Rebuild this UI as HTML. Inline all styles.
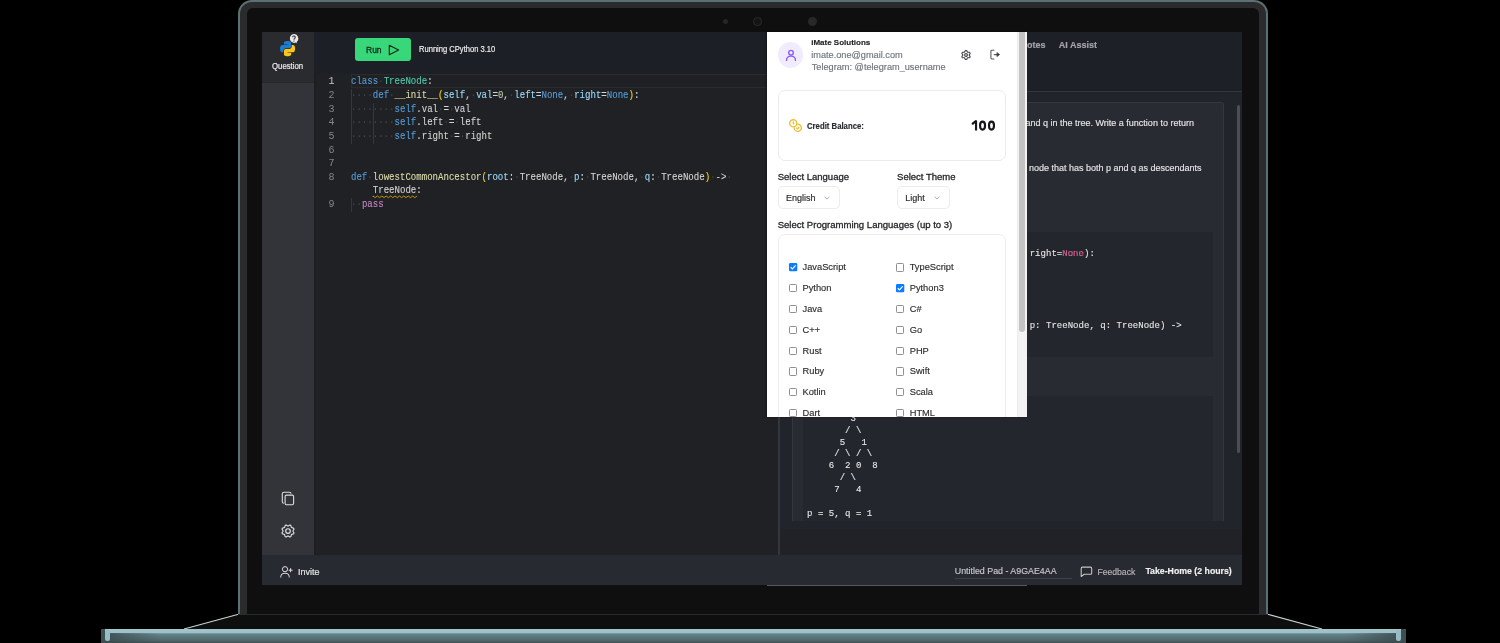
<!DOCTYPE html>
<html><head><meta charset="utf-8">
<style>
*{margin:0;padding:0;box-sizing:border-box}
html,body{width:1500px;height:643px;overflow:hidden;background:#000}
body{position:relative;font-family:"Liberation Sans",sans-serif}
.a{position:absolute}
.t{white-space:pre;line-height:normal;-webkit-text-stroke-width:0.15px}
.m{font-family:"Liberation Mono",monospace;white-space:pre}
svg{overflow:visible}
</style></head><body><div id="root" class="a" style="left:0;top:0;width:1500px;height:643px;will-change:transform">

<div class="a" style="left:238px;top:0px;width:1030px;height:615px;background:#5a7074;border-radius:14px 14px 0 0"></div>
<div class="a" style="left:240.4px;top:2px;width:1025.2px;height:613px;background:#2b2b2d;border-radius:12px 12px 0 0"></div>
<div class="a" style="left:247px;top:8px;width:1012px;height:607px;background:#0f0f0f;border-radius:6px 6px 0 0"></div>
<div class="a" style="left:722.9px;top:19px;width:5px;height:5px;border-radius:50%;background:#262626"></div>
<div class="a" style="left:753px;top:17.2px;width:8.6px;height:8.6px;border-radius:50%;background:#141414;border:1.4px solid #2c2c2c"></div>
<div class="a" style="left:807.5px;top:17.3px;width:9px;height:9px;border-radius:50%;background:#282828"></div>
<svg class="a" style="left:0;top:0" width="1500" height="643">
 <polygon points="238,614 1268,614 1322,629 184,629" fill="#0e0e0e"/>
 <line x1="238.5" y1="614.2" x2="184" y2="629" stroke="#c9d3d5" stroke-width="1.1"/>
 <line x1="1267.5" y1="614.2" x2="1322" y2="629" stroke="#c9d3d5" stroke-width="1.1"/>
 <line x1="238" y1="614.5" x2="1268" y2="614.5" stroke="#262b2d" stroke-width="1"/>
</svg>
<div class="a" style="left:100.6px;top:629px;width:1305px;height:14px;border-radius:2px 2px 0 0;background:linear-gradient(#a2c5cc 0,#9dc1c8 3.5px,#66838a 5px,#5b767b 8px,#4d6468 12px,#3d4e51 14px)"></div>
<div class="a" style="left:100.6px;top:633px;width:60px;height:10px;background:linear-gradient(to right,#3b4b4e 0,#3b4b4e 4px,rgba(59,75,78,.8) 10px,rgba(59,75,78,0) 60px)"></div>
<div class="a" style="left:1345.6px;top:633px;width:60px;height:10px;background:linear-gradient(to left,#3b4b4e 0,#3b4b4e 4px,rgba(59,75,78,.8) 10px,rgba(59,75,78,0) 60px)"></div>
<div class="a" style="left:100.6px;top:629px;width:4.6px;height:14px;border-radius:2px 0 0 0;background:#3d4f52"></div>
<div class="a" style="left:1401px;top:629px;width:4.6px;height:14px;border-radius:0 2px 0 0;background:#3d4f52"></div>
<div class="a" style="left:105px;top:630px;width:5px;height:11px;border-radius:3px 0 2px 2px;background:#98bcc3"></div>
<div class="a" style="left:1396px;top:630px;width:5px;height:11px;border-radius:0 3px 2px 2px;background:#98bcc3"></div>
<div class="a" style="left:262px;top:32px;width:980px;height:553px;background:#202125;"></div>
<div class="a" style="left:262px;top:32px;width:52px;height:50px;background:#2a2b2f;"></div>
<div class="a" style="left:262px;top:82px;width:52px;height:473px;background:#333439;"></div>
<div class="a" style="left:262px;top:82px;width:52px;height:1px;background:#26272b;"></div>
<div class="a" style="left:314px;top:32px;width:2px;height:523px;background:#1c1e24;"></div>
<div class="a" style="left:314px;top:32px;width:465px;height:42px;background:#1d1f27;"></div>
<div class="a" style="left:778px;top:32px;width:2px;height:523px;background:#33363c;"></div>
<div class="a" style="left:780px;top:32px;width:462px;height:59px;background:#1e2028;"></div>
<div class="a" style="left:780px;top:91px;width:462px;height:1px;background:#33363c;"></div>
<div class="a" style="left:780px;top:92px;width:462px;height:463px;background:#22242b;"></div>
<div class="a" style="left:780px;top:529px;width:462px;height:26px;background:#202228;"></div>
<div class="a" style="left:262px;top:555px;width:980px;height:30px;background:#272a31;"></div>
<svg class="a" style="left:280.3px;top:40.9px" width="15" height="15" viewBox="0 0 110 110">
<path fill="#1f7bcf" d="M54.9 0c-4.6 0-9 .4-12.8 1.1C30.8 3.1 28.7 7.3 28.7 15v10.2h26.6v3.4H18.7c-7.7 0-14.5 4.6-16.6 13.5-2.4 10.1-2.5 16.5 0 27.1 1.9 7.9 6.4 13.5 14.1 13.5h9.1V70.6c0-8.8 7.6-16.5 16.6-16.5h26.5c7.4 0 13.3-6.1 13.3-13.5V15c0-7.2-6.1-12.6-13.3-13.9C69.8.4 65 0 60.4 0z"/>
<path fill="#ffc61a" stroke="#2a2b2f" stroke-width="6" paint-order="stroke" d="M85.6 28.7v12c0 9.3-7.9 17.1-16.9 17.1H42.1c-7.3 0-13.3 6.2-13.3 13.5v25.5c0 7.2 6.3 11.5 13.3 13.6 8.4 2.5 16.5 2.9 26.5 0 6.7-1.9 13.3-5.8 13.3-13.6V86.5H55.5v-3.4h39.9c7.7 0 10.6-5.4 13.3-13.5 2.8-8.3 2.7-16.3 0-27.1-1.9-7.8-5.6-13.5-13.3-13.5z"/>
</svg>
<svg class="a" style="left:287.5px;top:32.5px" width="12" height="12" viewBox="0 0 12 12">
<path d="M5.9 0.9 A4.5 4.5 0 1 0 7.9 9.6 L8.9 10.6 L8.6 8.9 A4.5 4.5 0 0 0 5.9 0.9 Z" fill="#e9e9e9" stroke="#2a2b2f" stroke-width="0.8" paint-order="stroke"/>
<path d="M4.6 4.3 A1.35 1.35 0 1 1 6.6 5.5 C6.1 5.8 5.95 6.1 5.95 6.7" stroke="#3a3a3a" stroke-width="1.1" fill="none"/>
<circle cx="5.95" cy="8.1" r="0.65" fill="#3a3a3a"/>
</svg>
<div class="a t" style="top:60.63px;font-size:8.7px;color:#ececec;left:272.00px;transform:scaleX(0.896);transform-origin:left top;-webkit-text-stroke:0.2px #ececec;">Question</div>
<svg class="a" style="left:281px;top:491px" width="15" height="16" viewBox="0 0 15 16" fill="none" stroke="#dedede" stroke-width="1.1">
<rect x="4.1" y="4.1" width="8.5" height="9.6" rx="1.4"/>
<path d="M2.9 12.3 A1.6 1.6 0 0 1 1.3 10.7 V2.8 A1.6 1.6 0 0 1 2.9 1.2 H8.4 A1.6 1.6 0 0 1 10 2.8"/>
</svg>
<svg class="a" style="left:280.8px;top:523.6px" width="14" height="14" viewBox="0 0 14 14" fill="none" stroke="#e2e2e2" stroke-width="1.15" stroke-linejoin="round">
<path d="M12.00,7.00 L12.01,7.13 L12.05,7.26 L12.11,7.40 L12.19,7.55 L12.28,7.70 L12.38,7.85 L12.49,8.02 L12.59,8.19 L12.69,8.37 L12.77,8.55 L12.83,8.73 L12.87,8.91 L12.89,9.08 L12.87,9.25 L12.82,9.41 L12.74,9.56 L12.64,9.69 L12.50,9.80 L12.35,9.90 L12.17,9.99 L11.99,10.06 L11.80,10.11 L11.60,10.16 L11.41,10.20 L11.22,10.24 L11.05,10.28 L10.90,10.33 L10.76,10.38 L10.64,10.45 L10.54,10.54 L10.45,10.64 L10.38,10.76 L10.33,10.90 L10.28,11.05 L10.24,11.22 L10.20,11.41 L10.16,11.60 L10.11,11.80 L10.06,11.99 L9.99,12.17 L9.90,12.35 L9.80,12.50 L9.69,12.64 L9.56,12.74 L9.41,12.82 L9.25,12.87 L9.08,12.89 L8.91,12.87 L8.73,12.83 L8.55,12.77 L8.37,12.69 L8.19,12.59 L8.02,12.49 L7.85,12.38 L7.70,12.28 L7.55,12.19 L7.40,12.11 L7.26,12.05 L7.13,12.01 L7.00,12.00 L6.87,12.01 L6.74,12.05 L6.60,12.11 L6.45,12.19 L6.30,12.28 L6.15,12.38 L5.98,12.49 L5.81,12.59 L5.63,12.69 L5.45,12.77 L5.27,12.83 L5.09,12.87 L4.92,12.89 L4.75,12.87 L4.59,12.82 L4.44,12.74 L4.31,12.64 L4.20,12.50 L4.10,12.35 L4.01,12.17 L3.94,11.99 L3.89,11.80 L3.84,11.60 L3.80,11.41 L3.76,11.22 L3.72,11.05 L3.67,10.90 L3.62,10.76 L3.55,10.64 L3.46,10.54 L3.36,10.45 L3.24,10.38 L3.10,10.33 L2.95,10.28 L2.78,10.24 L2.59,10.20 L2.40,10.16 L2.20,10.11 L2.01,10.06 L1.83,9.99 L1.65,9.90 L1.50,9.80 L1.36,9.69 L1.26,9.56 L1.18,9.41 L1.13,9.25 L1.11,9.08 L1.13,8.91 L1.17,8.73 L1.23,8.55 L1.31,8.37 L1.41,8.19 L1.51,8.02 L1.62,7.85 L1.72,7.70 L1.81,7.55 L1.89,7.40 L1.95,7.26 L1.99,7.13 L2.00,7.00 L1.99,6.87 L1.95,6.74 L1.89,6.60 L1.81,6.45 L1.72,6.30 L1.62,6.15 L1.51,5.98 L1.41,5.81 L1.31,5.63 L1.23,5.45 L1.17,5.27 L1.13,5.09 L1.11,4.92 L1.13,4.75 L1.18,4.59 L1.26,4.44 L1.36,4.31 L1.50,4.20 L1.65,4.10 L1.83,4.01 L2.01,3.94 L2.20,3.89 L2.40,3.84 L2.59,3.80 L2.78,3.76 L2.95,3.72 L3.10,3.67 L3.24,3.62 L3.36,3.55 L3.46,3.46 L3.55,3.36 L3.62,3.24 L3.67,3.10 L3.72,2.95 L3.76,2.78 L3.80,2.59 L3.84,2.40 L3.89,2.20 L3.94,2.01 L4.01,1.83 L4.10,1.65 L4.20,1.50 L4.31,1.36 L4.44,1.26 L4.59,1.18 L4.75,1.13 L4.92,1.11 L5.09,1.13 L5.27,1.17 L5.45,1.23 L5.63,1.31 L5.81,1.41 L5.98,1.51 L6.15,1.62 L6.30,1.72 L6.45,1.81 L6.60,1.89 L6.74,1.95 L6.87,1.99 L7.00,2.00 L7.13,1.99 L7.26,1.95 L7.40,1.89 L7.55,1.81 L7.70,1.72 L7.85,1.62 L8.02,1.51 L8.19,1.41 L8.37,1.31 L8.55,1.23 L8.73,1.17 L8.91,1.13 L9.08,1.11 L9.25,1.13 L9.41,1.18 L9.56,1.26 L9.69,1.36 L9.80,1.50 L9.90,1.65 L9.99,1.83 L10.06,2.01 L10.11,2.20 L10.16,2.40 L10.20,2.59 L10.24,2.78 L10.28,2.95 L10.33,3.10 L10.38,3.24 L10.45,3.36 L10.54,3.46 L10.64,3.55 L10.76,3.62 L10.90,3.67 L11.05,3.72 L11.22,3.76 L11.41,3.80 L11.60,3.84 L11.80,3.89 L11.99,3.94 L12.17,4.01 L12.35,4.10 L12.50,4.20 L12.64,4.31 L12.74,4.44 L12.82,4.59 L12.87,4.75 L12.89,4.92 L12.87,5.09 L12.83,5.27 L12.77,5.45 L12.69,5.63 L12.59,5.81 L12.49,5.98 L12.38,6.15 L12.28,6.30 L12.19,6.45 L12.11,6.60 L12.05,6.74 L12.01,6.87Z"/>
<circle cx="7.0" cy="7.0" r="2.3"/>
</svg>
<div class="a" style="left:355.4px;top:37.5px;width:55.5px;height:23.5px;border-radius:3px;background:#38d87a"></div>
<div class="a t" style="top:43.83px;font-size:9.8px;color:#12261a;left:365.90px;transform:scaleX(0.867);transform-origin:left top;-webkit-text-stroke:0.3px #12261a;">Run</div>
<svg class="a" style="left:388px;top:43.5px" width="12" height="12" viewBox="0 0 12 12">
<path d="M1.3 1.2 L10.6 6 L1.3 10.8 Z" fill="none" stroke="#12261a" stroke-width="1.15" stroke-linejoin="round"/>
</svg>
<div class="a t" style="top:44.42px;font-size:8.6px;color:#f2f2f2;left:418.70px;transform:scaleX(0.882);transform-origin:left top;">Running CPython 3.10</div>
<div class="a" style="left:351px;top:73.8px;width:416px;height:13.9px;border:1px solid #2b2b2b;border-right:none"></div>
<div class="a m" style="left:300px;width:34.5px;text-align:right;top:75.30px;height:13.66px;line-height:13.66px;font-size:10px;color:#c6c6c6">1</div>
<div class="a m" style="left:351.3px;top:75.30px;height:13.66px;line-height:13.66px;font-size:10px;transform:scaleX(0.906);transform-origin:left top;-webkit-text-stroke:0.1px"><span style="color:#569cd6">class</span><span style="color:#45464a">·</span><span style="color:#4ec9b0">TreeNode</span><span style="color:#d4d4d4">:</span></div>
<div class="a m" style="left:300px;width:34.5px;text-align:right;top:88.96px;height:13.66px;line-height:13.66px;font-size:10px;color:#858585">2</div>
<div class="a m" style="left:351.3px;top:88.96px;height:13.66px;line-height:13.66px;font-size:10px;transform:scaleX(0.906);transform-origin:left top;-webkit-text-stroke:0.1px"><span style="color:#45464a">····</span><span style="color:#569cd6">def</span><span style="color:#45464a">·</span><span style="color:#dcdcaa">__init__</span><span style="color:#ffd700">(</span><span style="color:#9cdcfe">self</span><span style="color:#d4d4d4">,</span><span style="color:#45464a">·</span><span style="color:#9cdcfe">val</span><span style="color:#d4d4d4">=</span><span style="color:#b5cea8">0</span><span style="color:#d4d4d4">,</span><span style="color:#45464a">·</span><span style="color:#9cdcfe">left</span><span style="color:#d4d4d4">=</span><span style="color:#569cd6">None</span><span style="color:#d4d4d4">,</span><span style="color:#45464a">·</span><span style="color:#9cdcfe">right</span><span style="color:#d4d4d4">=</span><span style="color:#569cd6">None</span><span style="color:#ffd700">)</span><span style="color:#d4d4d4">:</span></div>
<div class="a m" style="left:300px;width:34.5px;text-align:right;top:102.62px;height:13.66px;line-height:13.66px;font-size:10px;color:#858585">3</div>
<div class="a m" style="left:351.3px;top:102.62px;height:13.66px;line-height:13.66px;font-size:10px;transform:scaleX(0.906);transform-origin:left top;-webkit-text-stroke:0.1px"><span style="color:#45464a">········</span><span style="color:#569cd6">self</span><span style="color:#d4d4d4">.val</span><span style="color:#45464a">·</span><span style="color:#d4d4d4">=</span><span style="color:#45464a">·</span><span style="color:#d4d4d4">val</span></div>
<div class="a m" style="left:300px;width:34.5px;text-align:right;top:116.28px;height:13.66px;line-height:13.66px;font-size:10px;color:#858585">4</div>
<div class="a m" style="left:351.3px;top:116.28px;height:13.66px;line-height:13.66px;font-size:10px;transform:scaleX(0.906);transform-origin:left top;-webkit-text-stroke:0.1px"><span style="color:#45464a">········</span><span style="color:#569cd6">self</span><span style="color:#d4d4d4">.left</span><span style="color:#45464a">·</span><span style="color:#d4d4d4">=</span><span style="color:#45464a">·</span><span style="color:#d4d4d4">left</span></div>
<div class="a m" style="left:300px;width:34.5px;text-align:right;top:129.94px;height:13.66px;line-height:13.66px;font-size:10px;color:#858585">5</div>
<div class="a m" style="left:351.3px;top:129.94px;height:13.66px;line-height:13.66px;font-size:10px;transform:scaleX(0.906);transform-origin:left top;-webkit-text-stroke:0.1px"><span style="color:#45464a">········</span><span style="color:#569cd6">self</span><span style="color:#d4d4d4">.right</span><span style="color:#45464a">·</span><span style="color:#d4d4d4">=</span><span style="color:#45464a">·</span><span style="color:#d4d4d4">right</span></div>
<div class="a m" style="left:300px;width:34.5px;text-align:right;top:143.60px;height:13.66px;line-height:13.66px;font-size:10px;color:#858585">6</div>
<div class="a m" style="left:300px;width:34.5px;text-align:right;top:157.26px;height:13.66px;line-height:13.66px;font-size:10px;color:#858585">7</div>
<div class="a m" style="left:300px;width:34.5px;text-align:right;top:170.92px;height:13.66px;line-height:13.66px;font-size:10px;color:#858585">8</div>
<div class="a m" style="left:351.3px;top:170.92px;height:13.66px;line-height:13.66px;font-size:10px;transform:scaleX(0.906);transform-origin:left top;-webkit-text-stroke:0.1px"><span style="color:#569cd6">def</span><span style="color:#45464a">·</span><span style="color:#dcdcaa">lowestCommonAncestor</span><span style="color:#ffd700">(</span><span style="color:#9cdcfe">root</span><span style="color:#d4d4d4">:</span><span style="color:#45464a">·</span><span style="color:#d4d4d4">TreeNode</span><span style="color:#d4d4d4">,</span><span style="color:#45464a">·</span><span style="color:#9cdcfe">p</span><span style="color:#d4d4d4">:</span><span style="color:#45464a">·</span><span style="color:#d4d4d4">TreeNode</span><span style="color:#d4d4d4">,</span><span style="color:#45464a">·</span><span style="color:#9cdcfe">q</span><span style="color:#d4d4d4">:</span><span style="color:#45464a">·</span><span style="color:#d4d4d4">TreeNode</span><span style="color:#ffd700">)</span><span style="color:#45464a">·</span><span style="color:#d4d4d4">-&gt;</span><span style="color:#45464a">·</span></div>
<div class="a m" style="left:351.3px;top:183.88px;height:13.66px;line-height:13.66px;font-size:10px;transform:scaleX(0.906);transform-origin:left top;-webkit-text-stroke:0.1px"><span style="color:#45464a">    </span><span style="color:#d4d4d4">TreeNode</span><span style="color:#d4d4d4">:</span></div>
<div class="a m" style="left:300px;width:34.5px;text-align:right;top:198.24px;height:13.66px;line-height:13.66px;font-size:10px;color:#858585">9</div>
<div class="a m" style="left:351.3px;top:198.24px;height:13.66px;line-height:13.66px;font-size:10px;transform:scaleX(0.906);transform-origin:left top;-webkit-text-stroke:0.1px"><span style="color:#45464a">··</span><span style="color:#c586c0">pass</span></div>
<div class="a" style="left:351.3px;top:88.96px;width:1px;height:54.64px;background:#36373a;"></div>
<div class="a" style="left:373.06px;top:102.62px;width:1px;height:40.980000000000004px;background:#36373a;"></div>
<div class="a" style="left:351.3px;top:198.24px;width:1px;height:13.66px;background:#36373a;"></div>
<svg class="a" style="left:373px;top:194.5px" width="45" height="4" viewBox="0 0 45 4">
<path d="M0 2 L0.00 1.0 L2.20 2.6 L4.40 1.0 L6.60 2.6 L8.80 1.0 L11.00 2.6 L13.20 1.0 L15.40 2.6 L17.60 1.0 L19.80 2.6 L22.00 1.0 L24.20 2.6 L26.40 1.0 L28.60 2.6 L30.80 1.0 L33.00 2.6 L35.20 1.0 L37.40 2.6 L39.60 1.0 L41.80 2.6 L44.00 1.0" stroke="#cfa000" stroke-width="0.9" fill="none" stroke-linejoin="round"/>
</svg>
<div class="a t" style="top:39.75px;font-size:9px;color:#a4a5aa;right:454.40px;font-weight:bold;">Notes</div>
<div class="a t" style="top:39.75px;font-size:9px;color:#a4a5aa;left:1058.80px;font-weight:bold;">AI Assist</div>
<div class="a" style="left:792px;top:102px;width:432px;height:419px;background:#282b31;border:1px solid #34373d;border-bottom:none;border-radius:3px 3px 0 0"></div>
<div class="a t" style="top:118.16px;font-size:9px;color:#e4e4e6;right:306.10px;">Given a binary tree root and two nodes p and q in the tree. Write a function to return</div>
<div class="a t" style="top:162.55px;font-size:9px;color:#e4e4e6;right:298.40px;">The lowest common ancestor is defined as the lowest node that has both p and q as descendants</div>
<div class="a" style="left:803px;top:232px;width:410px;height:125px;background:#23262c"></div>
<div class="a m" style="left:807.1px;top:236.20px;height:11.9px;line-height:11.9px;font-size:9.05px;-webkit-text-stroke:0.1px #e6e6e6"><span style="color:#e6e6e6">class TreeNode:</span></div>
<div class="a m" style="left:807.1px;top:248.10px;height:11.9px;line-height:11.9px;font-size:9.05px;-webkit-text-stroke:0.1px #e6e6e6"><span style="color:#e6e6e6">    def __init__(self, val=0, left=None, right=</span><span style="color:#e0307a">None</span><span style="color:#e6e6e6">):</span></div>
<div class="a m" style="left:807.1px;top:260.00px;height:11.9px;line-height:11.9px;font-size:9.05px;-webkit-text-stroke:0.1px #e6e6e6"><span style="color:#e6e6e6">        self.val = val</span></div>
<div class="a m" style="left:807.1px;top:271.90px;height:11.9px;line-height:11.9px;font-size:9.05px;-webkit-text-stroke:0.1px #e6e6e6"><span style="color:#e6e6e6">        self.left = left</span></div>
<div class="a m" style="left:807.1px;top:283.80px;height:11.9px;line-height:11.9px;font-size:9.05px;-webkit-text-stroke:0.1px #e6e6e6"><span style="color:#e6e6e6">        self.right = right</span></div>
<div class="a m" style="left:807.1px;top:319.50px;height:11.9px;line-height:11.9px;font-size:9.05px;-webkit-text-stroke:0.1px #e6e6e6"><span style="color:#e6e6e6">def lowestCommonAncestor(root: TreeNode, p: TreeNode, q: TreeNode) -&gt;</span></div>
<div class="a m" style="left:807.1px;top:331.40px;height:11.9px;line-height:11.9px;font-size:9.05px;-webkit-text-stroke:0.1px #e6e6e6"><span style="color:#e6e6e6">TreeNode:</span></div>
<div class="a m" style="left:807.1px;top:343.30px;height:11.9px;line-height:11.9px;font-size:9.05px;-webkit-text-stroke:0.1px #e6e6e6"><span style="color:#e6e6e6">    pass</span></div>
<div class="a" style="left:803px;top:396.4px;width:410px;height:124.6px;background:#23262c;overflow:hidden">
<div class="a m" style="left:4.1px;top:16.40px;height:11.9px;line-height:11.9px;font-size:9.05px;color:#e6e6e6;-webkit-text-stroke:0.1px #e6e6e6">        3</div>
<div class="a m" style="left:4.1px;top:28.30px;height:11.9px;line-height:11.9px;font-size:9.05px;color:#e6e6e6;-webkit-text-stroke:0.1px #e6e6e6">       / \</div>
<div class="a m" style="left:4.1px;top:40.20px;height:11.9px;line-height:11.9px;font-size:9.05px;color:#e6e6e6;-webkit-text-stroke:0.1px #e6e6e6">      5   1</div>
<div class="a m" style="left:4.1px;top:52.10px;height:11.9px;line-height:11.9px;font-size:9.05px;color:#e6e6e6;-webkit-text-stroke:0.1px #e6e6e6">     / \ / \</div>
<div class="a m" style="left:4.1px;top:64.00px;height:11.9px;line-height:11.9px;font-size:9.05px;color:#e6e6e6;-webkit-text-stroke:0.1px #e6e6e6">    6  2 0  8</div>
<div class="a m" style="left:4.1px;top:75.90px;height:11.9px;line-height:11.9px;font-size:9.05px;color:#e6e6e6;-webkit-text-stroke:0.1px #e6e6e6">      / \</div>
<div class="a m" style="left:4.1px;top:87.80px;height:11.9px;line-height:11.9px;font-size:9.05px;color:#e6e6e6;-webkit-text-stroke:0.1px #e6e6e6">     7   4</div>
<div class="a m" style="left:4.1px;top:111.60px;height:11.9px;line-height:11.9px;font-size:9.05px;color:#e6e6e6;-webkit-text-stroke:0.1px #e6e6e6">p = 5, q = 1</div>
<div class="a m" style="left:4.1px;top:123.50px;height:11.9px;line-height:11.9px;font-size:9.05px;color:#e6e6e6;-webkit-text-stroke:0.1px #e6e6e6">Output: 3</div>
</div>
<div class="a" style="left:1237px;top:105px;width:3px;height:348px;border-radius:2px;background:#4c4e53"></div>
<svg class="a" style="left:280px;top:565.5px" width="13" height="12" viewBox="0 0 13 12" fill="none" stroke="#dedede" stroke-width="1">
<circle cx="5" cy="3.2" r="2.6"/>
<path d="M0.8 11.5 V10.2 A3.3 3.3 0 0 1 4.1 7.3 H5.9 A3.3 3.3 0 0 1 9.2 10.2 V11.5"/>
<path d="M10.6 2.2 V6.2 M8.6 4.2 H12.6"/>
</svg>
<div class="a t" style="top:566.75px;font-size:9px;color:#e2e2e2;left:297.90px;-webkit-text-stroke:0.2px #e2e2e2;">Invite</div>
<div class="a t" style="top:566.39px;font-size:8.85px;color:#c9cacd;left:954.80px;">Untitled Pad - A9GAE4AA</div>
<div class="a" style="left:954.8px;top:577.6px;width:117px;height:1px;background:#3f4249;"></div>
<svg class="a" style="left:1079.5px;top:565.8px" width="13" height="12" viewBox="0 0 13 12" fill="none" stroke="#c4c4c4" stroke-width="1.1" stroke-linejoin="round">
<path d="M2.4 1.1 H10.4 A1.3 1.3 0 0 1 11.7 2.4 V6.9 A1.3 1.3 0 0 1 10.4 8.2 H4.3 L1.2 10.5 V2.4 A1.3 1.3 0 0 1 2.4 1.1 Z"/>
</svg>
<div class="a t" style="top:566.62px;font-size:8.6px;color:#b4b5b8;left:1097.50px;">Feedback</div>
<div class="a t" style="top:566.48px;font-size:8.75px;color:#f1f1f1;left:1145.40px;font-weight:bold;">Take-Home (2 hours)</div>
<div class="a" style="left:766.5px;top:32px;width:260.5px;height:385px;background:#fff;box-shadow:-1px 0 2px rgba(0,0,0,.35)"></div>
<div class="a" style="left:0;top:0;width:1500px;height:643px;clip-path:inset(32px 473px 226px 766.5px)">
<div class="a" style="left:1016.9px;top:32px;width:10.1px;height:385px;background:#f3f3f3;border-left:1px solid #ececec"></div>
<div class="a" style="left:1019.2px;top:32px;width:5.4px;height:300.3px;border-radius:0 0 3px 3px;background:#c3c3c3"></div>
<div class="a" style="left:777.6px;top:42.1px;width:25.7px;height:25.7px;border-radius:50%;background:#f1ecfd"></div>
<svg class="a" style="left:785.5px;top:48.5px" width="11" height="13" viewBox="0 0 11 13" fill="none" stroke="#8b5cf6" stroke-width="1.4" stroke-linecap="round">
<circle cx="5" cy="3.7" r="2.3"/>
<path d="M0.5 11.4 A4.5 4.3 0 0 1 9.5 11.4"/>
</svg>
<div class="a t" style="top:37.96px;font-size:8px;color:#1f2024;left:811.20px;font-weight:bold;">iMate Solutions</div>
<div class="a t" style="top:49.67px;font-size:9.2px;color:#70747c;left:811.20px;">imate.one@gmail.com</div>
<div class="a t" style="top:61.67px;font-size:9.2px;color:#6f737b;left:811.70px;">Telegram: @telegram_username</div>
<svg class="a" style="left:961px;top:50px" width="10" height="10" viewBox="0 0 10 10" fill="none" stroke="#4b4d52" stroke-width="1.2" stroke-linejoin="round">
<path d="M8.30,5.00 L8.30,5.09 L8.30,5.17 L8.29,5.26 L8.30,5.35 L8.36,5.44 L8.43,5.54 L8.51,5.65 L8.60,5.76 L8.68,5.88 L8.77,6.01 L8.85,6.14 L8.92,6.27 L8.98,6.41 L9.04,6.55 L9.07,6.69 L9.09,6.82 L9.06,6.94 L9.01,7.04 L8.95,7.15 L8.90,7.25 L8.84,7.35 L8.77,7.45 L8.71,7.55 L8.63,7.63 L8.50,7.68 L8.36,7.72 L8.21,7.75 L8.06,7.76 L7.91,7.76 L7.76,7.76 L7.61,7.75 L7.46,7.73 L7.32,7.72 L7.19,7.70 L7.06,7.69 L6.95,7.68 L6.87,7.72 L6.80,7.77 L6.72,7.81 L6.65,7.86 L6.57,7.90 L6.50,7.94 L6.42,7.98 L6.35,8.03 L6.30,8.13 L6.25,8.25 L6.19,8.37 L6.14,8.50 L6.08,8.63 L6.01,8.77 L5.94,8.90 L5.86,9.03 L5.77,9.16 L5.68,9.27 L5.58,9.37 L5.47,9.46 L5.35,9.49 L5.24,9.49 L5.12,9.50 L5.00,9.50 L4.88,9.50 L4.76,9.49 L4.65,9.49 L4.53,9.46 L4.42,9.37 L4.32,9.27 L4.23,9.16 L4.14,9.03 L4.06,8.90 L3.99,8.77 L3.92,8.63 L3.86,8.50 L3.81,8.37 L3.75,8.25 L3.70,8.13 L3.65,8.03 L3.58,7.98 L3.50,7.94 L3.43,7.90 L3.35,7.86 L3.28,7.81 L3.20,7.77 L3.13,7.72 L3.05,7.68 L2.94,7.69 L2.81,7.70 L2.68,7.72 L2.54,7.73 L2.39,7.75 L2.24,7.76 L2.09,7.76 L1.94,7.76 L1.79,7.75 L1.64,7.72 L1.50,7.68 L1.37,7.63 L1.29,7.55 L1.23,7.45 L1.16,7.35 L1.10,7.25 L1.05,7.15 L0.99,7.04 L0.94,6.94 L0.91,6.82 L0.93,6.69 L0.96,6.55 L1.02,6.41 L1.08,6.27 L1.15,6.14 L1.23,6.01 L1.32,5.88 L1.40,5.76 L1.49,5.65 L1.57,5.54 L1.64,5.44 L1.70,5.35 L1.71,5.26 L1.70,5.17 L1.70,5.09 L1.70,5.00 L1.70,4.91 L1.70,4.83 L1.71,4.74 L1.70,4.65 L1.64,4.56 L1.57,4.46 L1.49,4.35 L1.40,4.24 L1.32,4.12 L1.23,3.99 L1.15,3.86 L1.08,3.73 L1.02,3.59 L0.96,3.45 L0.93,3.31 L0.91,3.18 L0.94,3.06 L0.99,2.96 L1.05,2.85 L1.10,2.75 L1.16,2.65 L1.23,2.55 L1.29,2.45 L1.37,2.37 L1.50,2.32 L1.64,2.28 L1.79,2.25 L1.94,2.24 L2.09,2.24 L2.24,2.24 L2.39,2.25 L2.54,2.27 L2.68,2.28 L2.81,2.30 L2.94,2.31 L3.05,2.32 L3.13,2.28 L3.20,2.23 L3.28,2.19 L3.35,2.14 L3.43,2.10 L3.50,2.06 L3.58,2.02 L3.65,1.97 L3.70,1.87 L3.75,1.75 L3.81,1.63 L3.86,1.50 L3.92,1.37 L3.99,1.23 L4.06,1.10 L4.14,0.97 L4.23,0.84 L4.32,0.73 L4.42,0.63 L4.53,0.54 L4.65,0.51 L4.76,0.51 L4.88,0.50 L5.00,0.50 L5.12,0.50 L5.24,0.51 L5.35,0.51 L5.47,0.54 L5.58,0.63 L5.68,0.73 L5.77,0.84 L5.86,0.97 L5.94,1.10 L6.01,1.23 L6.08,1.37 L6.14,1.50 L6.19,1.63 L6.25,1.75 L6.30,1.87 L6.35,1.97 L6.42,2.02 L6.50,2.06 L6.57,2.10 L6.65,2.14 L6.72,2.19 L6.80,2.23 L6.87,2.28 L6.95,2.32 L7.06,2.31 L7.19,2.30 L7.32,2.28 L7.46,2.27 L7.61,2.25 L7.76,2.24 L7.91,2.24 L8.06,2.24 L8.21,2.25 L8.36,2.28 L8.50,2.32 L8.63,2.37 L8.71,2.45 L8.77,2.55 L8.84,2.65 L8.90,2.75 L8.95,2.85 L9.01,2.96 L9.06,3.06 L9.09,3.18 L9.07,3.31 L9.04,3.45 L8.98,3.59 L8.92,3.73 L8.85,3.86 L8.77,3.99 L8.68,4.12 L8.60,4.24 L8.51,4.35 L8.43,4.46 L8.36,4.56 L8.30,4.65 L8.29,4.74 L8.30,4.83 L8.30,4.91Z"/>
<circle cx="5.0" cy="5.0" r="1.4"/>
</svg>
<svg class="a" style="left:989.5px;top:49.2px" width="11" height="11" viewBox="0 0 11 11" fill="none" stroke="#55575c" stroke-width="1.1" stroke-linecap="round" stroke-linejoin="round">
<path d="M3.9 1.2 H1.8 A0.9 0.9 0 0 0 0.9 2.1 V9.1 A0.9 0.9 0 0 0 1.8 10 H3.9"/>
<path d="M4.3 5.6 H7.5"/>
<path d="M7.2 3.7 L9.6 5.6 L7.2 7.5 Z" fill="#33353a" stroke="#33353a" stroke-width="0.6"/>
</svg>
<div class="a" style="left:777.7px;top:89.5px;width:228.4px;height:71.6px;border:1px solid #ebebeb;border-radius:7px"></div>
<svg class="a" style="left:788.5px;top:119px" width="13" height="13" viewBox="0 0 13 13" fill="none" stroke="#ecc03a" stroke-width="1.4">
<circle cx="4.3" cy="4.3" r="3.6"/>
<path d="M4.3 2.6 V4.3 L5.3 5"/>
<path d="M8.4 5.2 A3.6 3.6 0 1 1 5.2 8.4"/>
<path d="M7.2 8.8 L8.6 9.8 L10.2 7.9"/>
</svg>
<div class="a t" style="top:120.70px;font-size:8.4px;color:#2a2b30;left:806.60px;font-weight:bold;transform:scaleX(0.925);transform-origin:left top;">Credit Balance:</div>
<svg class="a" style="left:0;top:0" width="1" height="1"><g fill="none" stroke="#15161a" stroke-width="2.15">
<path d="M972.7 123.7 L975.6 121.3" stroke-linecap="round"/>
<path d="M976.05 120.6 V130.6"/>
<ellipse cx="982.55" cy="125.6" rx="2.5" ry="3.95"/>
<ellipse cx="991.5" cy="125.6" rx="2.5" ry="3.95"/>
</g></svg>
<div class="a t" style="top:170.50px;font-size:9.5px;color:#26272b;left:777.70px;-webkit-text-stroke:0.3px #26272b;">Select Language</div>
<div class="a t" style="top:170.50px;font-size:9.5px;color:#26272b;left:897.10px;-webkit-text-stroke:0.3px #26272b;">Select Theme</div>
<div class="a" style="left:777.7px;top:186.2px;width:62.2px;height:23.2px;border:1px solid #ececec;border-radius:5px"></div>
<div class="a t" style="top:193.05px;font-size:9px;color:#2a2a2a;left:785.90px;">English</div>
<div class="a" style="left:897.1px;top:186.2px;width:53.3px;height:23.2px;border:1px solid #ececec;border-radius:5px"></div>
<div class="a t" style="top:193.05px;font-size:9px;color:#2a2a2a;left:905.30px;">Light</div>
<svg class="a" style="left:823.5px;top:195.8px" width="6" height="4" viewBox="0 0 6 4"><path d="M0.5 0.8 L3 3 L5.5 0.8" fill="none" stroke="#9a9a9a" stroke-width="0.8"/></svg>
<svg class="a" style="left:934.0px;top:195.8px" width="6" height="4" viewBox="0 0 6 4"><path d="M0.5 0.8 L3 3 L5.5 0.8" fill="none" stroke="#9a9a9a" stroke-width="0.8"/></svg>
<div class="a t" style="top:219.16px;font-size:9.55px;color:#26272b;left:777.70px;-webkit-text-stroke:0.3px #26272b;">Select Programming Languages (up to 3)</div>
<div class="a" style="left:778px;top:234.4px;width:228.3px;height:200px;border:1px solid #ececec;border-radius:7px"></div>
<svg class="a" style="left:788.6px;top:263.2px" width="8.3" height="8.3" viewBox="0 0 8 8"><rect x="0" y="0" width="8" height="8" rx="1.3" fill="#0b7bff"/><path d="M1.7 4.1 L3.3 5.7 L6.4 2.3" stroke="#fff" stroke-width="1.1" fill="none"/></svg>
<div class="a" style="left:896.1px;top:263.4px;width:8.3px;height:8.3px;border:0.75px solid #8f8f8f;border-radius:1.3px"></div>
<div class="a t" style="top:262.38px;font-size:9.3px;color:#2e2e2e;left:802.50px;">JavaScript</div>
<div class="a t" style="top:262.38px;font-size:9.3px;color:#2e2e2e;left:909.70px;">TypeScript</div>
<div class="a" style="left:788.6px;top:284.2px;width:8.3px;height:8.3px;border:0.75px solid #8f8f8f;border-radius:1.3px"></div>
<svg class="a" style="left:896.1px;top:284.0px" width="8.3" height="8.3" viewBox="0 0 8 8"><rect x="0" y="0" width="8" height="8" rx="1.3" fill="#0b7bff"/><path d="M1.7 4.1 L3.3 5.7 L6.4 2.3" stroke="#fff" stroke-width="1.1" fill="none"/></svg>
<div class="a t" style="top:283.18px;font-size:9.3px;color:#2e2e2e;left:802.50px;">Python</div>
<div class="a t" style="top:283.18px;font-size:9.3px;color:#2e2e2e;left:909.70px;">Python3</div>
<div class="a" style="left:788.6px;top:305.0px;width:8.3px;height:8.3px;border:0.75px solid #8f8f8f;border-radius:1.3px"></div>
<div class="a" style="left:896.1px;top:305.0px;width:8.3px;height:8.3px;border:0.75px solid #8f8f8f;border-radius:1.3px"></div>
<div class="a t" style="top:303.98px;font-size:9.3px;color:#2e2e2e;left:802.50px;">Java</div>
<div class="a t" style="top:303.98px;font-size:9.3px;color:#2e2e2e;left:909.70px;">C#</div>
<div class="a" style="left:788.6px;top:325.79999999999995px;width:8.3px;height:8.3px;border:0.75px solid #8f8f8f;border-radius:1.3px"></div>
<div class="a" style="left:896.1px;top:325.79999999999995px;width:8.3px;height:8.3px;border:0.75px solid #8f8f8f;border-radius:1.3px"></div>
<div class="a t" style="top:324.78px;font-size:9.3px;color:#2e2e2e;left:802.50px;">C++</div>
<div class="a t" style="top:324.78px;font-size:9.3px;color:#2e2e2e;left:909.70px;">Go</div>
<div class="a" style="left:788.6px;top:346.59999999999997px;width:8.3px;height:8.3px;border:0.75px solid #8f8f8f;border-radius:1.3px"></div>
<div class="a" style="left:896.1px;top:346.59999999999997px;width:8.3px;height:8.3px;border:0.75px solid #8f8f8f;border-radius:1.3px"></div>
<div class="a t" style="top:345.58px;font-size:9.3px;color:#2e2e2e;left:802.50px;">Rust</div>
<div class="a t" style="top:345.58px;font-size:9.3px;color:#2e2e2e;left:909.70px;">PHP</div>
<div class="a" style="left:788.6px;top:367.4px;width:8.3px;height:8.3px;border:0.75px solid #8f8f8f;border-radius:1.3px"></div>
<div class="a" style="left:896.1px;top:367.4px;width:8.3px;height:8.3px;border:0.75px solid #8f8f8f;border-radius:1.3px"></div>
<div class="a t" style="top:366.38px;font-size:9.3px;color:#2e2e2e;left:802.50px;">Ruby</div>
<div class="a t" style="top:366.38px;font-size:9.3px;color:#2e2e2e;left:909.70px;">Swift</div>
<div class="a" style="left:788.6px;top:388.2px;width:8.3px;height:8.3px;border:0.75px solid #8f8f8f;border-radius:1.3px"></div>
<div class="a" style="left:896.1px;top:388.2px;width:8.3px;height:8.3px;border:0.75px solid #8f8f8f;border-radius:1.3px"></div>
<div class="a t" style="top:387.18px;font-size:9.3px;color:#2e2e2e;left:802.50px;">Kotlin</div>
<div class="a t" style="top:387.18px;font-size:9.3px;color:#2e2e2e;left:909.70px;">Scala</div>
<div class="a" style="left:788.6px;top:409.0px;width:8.3px;height:8.3px;border:0.75px solid #8f8f8f;border-radius:1.3px"></div>
<div class="a" style="left:896.1px;top:409.0px;width:8.3px;height:8.3px;border:0.75px solid #8f8f8f;border-radius:1.3px"></div>
<div class="a t" style="top:407.98px;font-size:9.3px;color:#2e2e2e;left:802.50px;">Dart</div>
<div class="a t" style="top:407.98px;font-size:9.3px;color:#2e2e2e;left:909.70px;">HTML</div>
</div>
<div class="a" style="left:766.5px;top:584.6px;width:260.5px;height:1px;background:#54575d;"></div>
</div></body></html>
